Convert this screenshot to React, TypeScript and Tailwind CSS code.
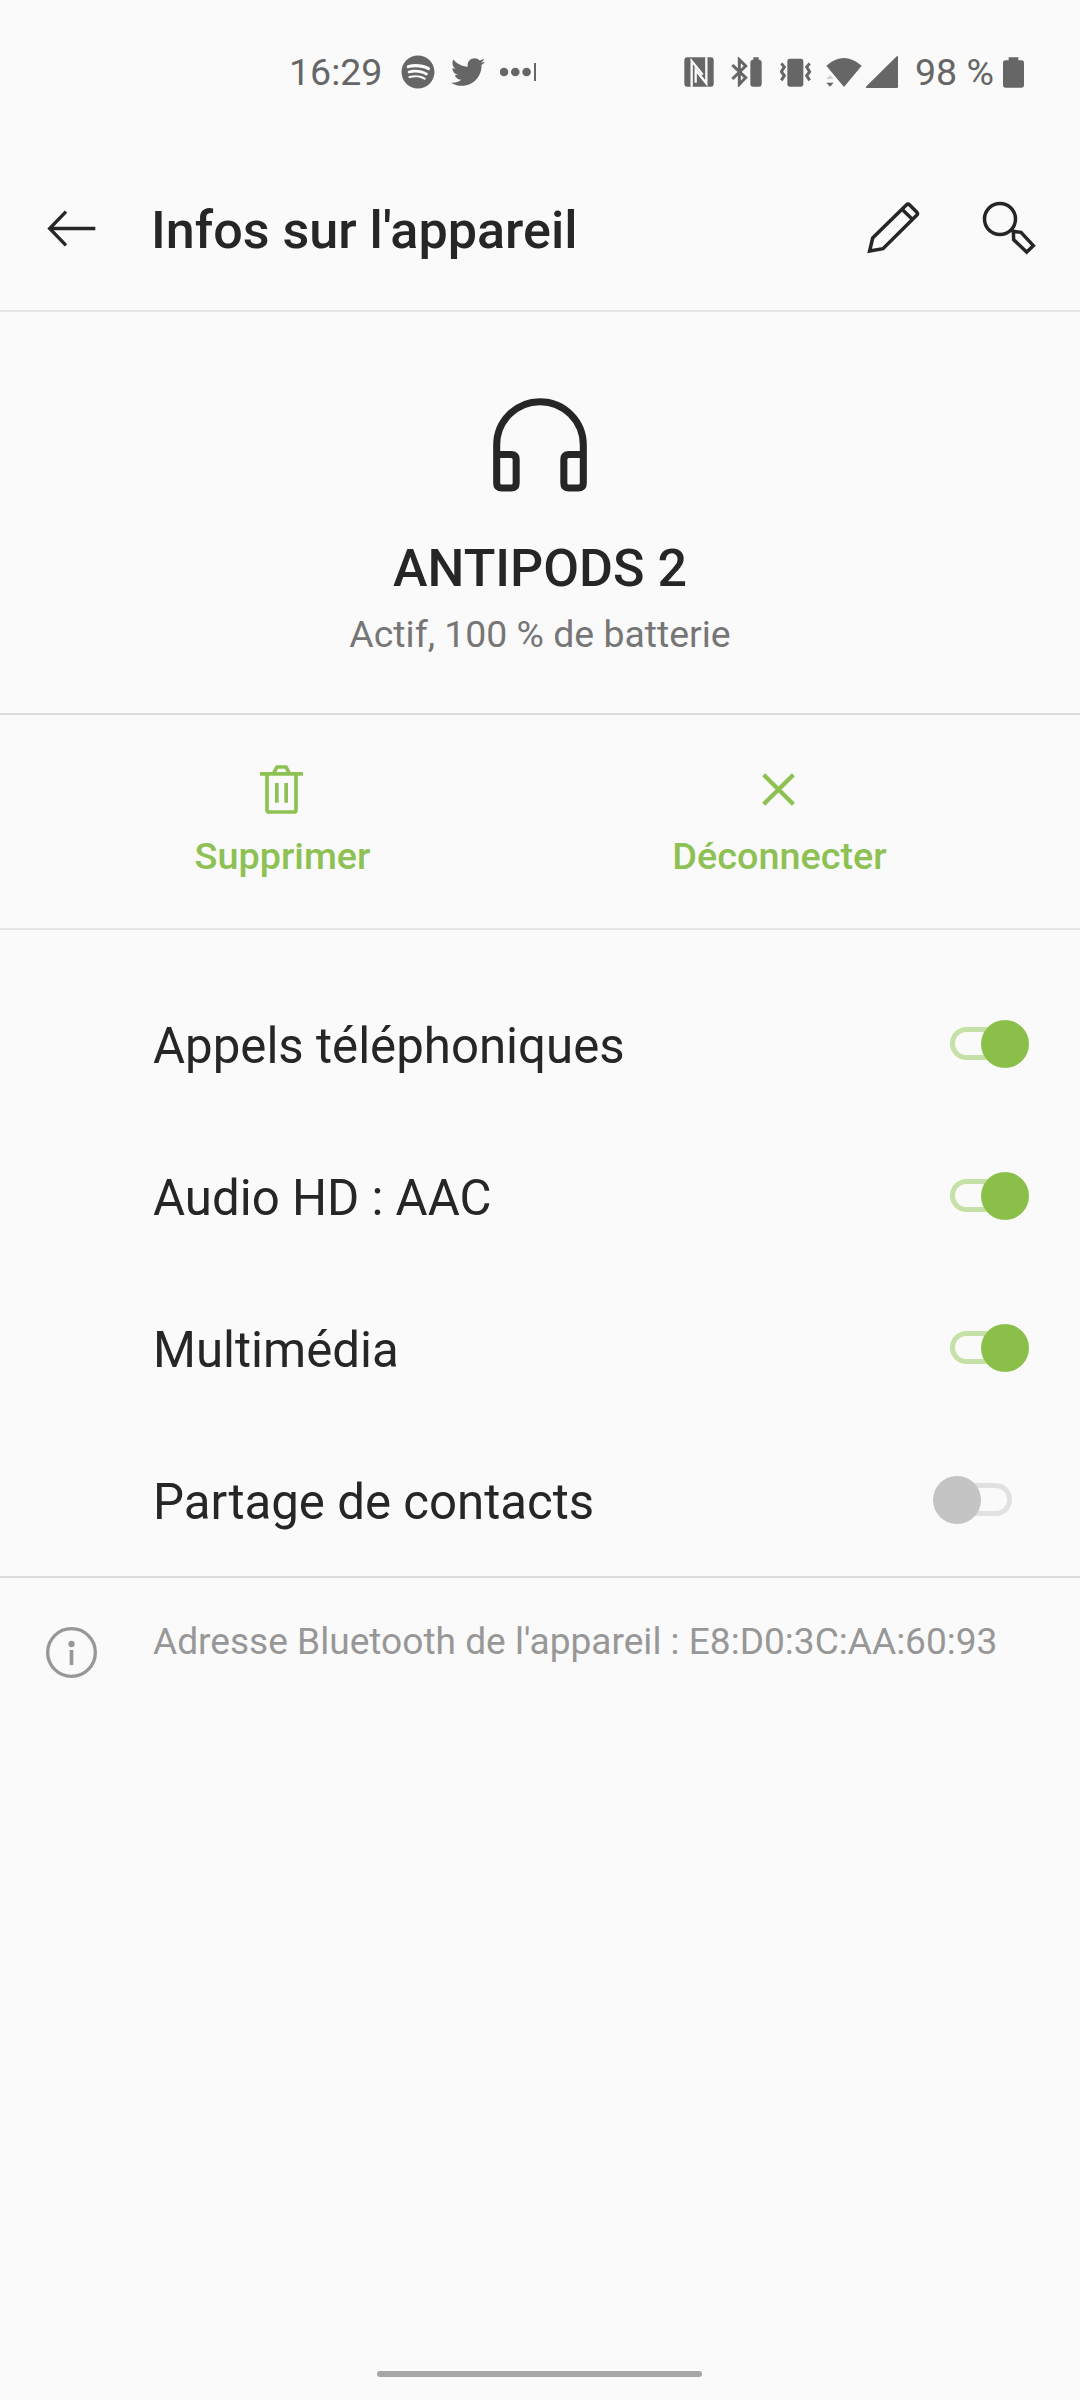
import { useState } from "react";
import { FaSpotify, FaTwitter } from "react-icons/fa";

function StatusBar() {
  return (
    <div className="flex h-[144px] items-center text-[37.5px] leading-none text-[#666666]">
      <span className="mt-[1px] ml-[289px] w-[112px]">16:29</span>
      <FaSpotify className="h-[34px] w-[34px]" />
      <FaTwitter className="ml-[16px] h-[34px] w-[34px]" />
      <svg className="ml-[15px] h-[18px] w-[36px]" viewBox="0 0 36 18" fill="currentColor">
        <circle cx="4" cy="9" r="4.3" />
        <circle cx="15.3" cy="9" r="4.3" />
        <circle cx="26.6" cy="9" r="4.3" />
        <path d="M34 0h2v18h-2z" />
      </svg>

      {/* Right side */}

      <svg className="ml-[148px] h-[30px] w-[30px]" viewBox="0 0 90 90">
        <rect x="1" y="1" width="88" height="88" rx="9" fill="currentColor" />
        <path
          d="M23 89V12L56 53M67 1V79L35 39V77"
          fill="none"
          stroke="#fafafa"
          strokeWidth="7"
        />
      </svg>
      <svg className="ml-[17px] h-[30px] w-[31px]" viewBox="0 0 93 90">
        <path
          d="M4 24L44 62L25 82V8L44 27L4 66"
          fill="none"
          stroke="currentColor"
          strokeWidth="9"
        />
        <path
          d="M67 1h16v7h3q6 2 6 8v65q0 8-8 8H66q-8 0-8-8V16q0-6 6-8h3z"
          fill="currentColor"
        />
      </svg>
      <svg className="ml-[18px] h-[30px] w-[31px]" viewBox="0 0 93 90">
        <rect x="22" y="5" width="48" height="84" rx="7" fill="currentColor" />
        <path
          d="M4 19L13 30L4 44L13 56L4 70M89 19L80 30L89 44L80 56L89 70"
          fill="none"
          stroke="currentColor"
          strokeWidth="9"
        />
      </svg>
      <svg className="ml-[15px] h-[30px] w-[36px]" viewBox="0 0 108 90">
        <path d="M1 26Q53-20 107 26L54 90z" fill="currentColor" />
        <path d="M1 66L12 54L23 66z" fill="#d2d2d2" />
        <path d="M1 77H23L12 89z" fill="currentColor" />
      </svg>
      <svg className="ml-[4px] h-[32px] w-[32px]" viewBox="0 0 96 96" fill="currentColor">
        <path d="M90 3Q96-3 96 4V92Q96 96 92 96H4Q-3 96 2 90z" />
      </svg>
      <span className="mt-[1px] ml-[17px] w-[88px] whitespace-nowrap">98 %</span>
      <svg className="h-[31px] w-[21px]" viewBox="0 0 63 93" fill="currentColor">
        <path d="M17 1h29v9h10q7 0 7 7v67q0 8-8 8H8q-8 0-8-8V17q0-7 7-7h10z" />
      </svg>
    </div>
  );
}

function Header() {
  return (
    <header className="flex h-[168px] items-center border-b-2 border-[#e5e5e5] pr-[44px] pl-[46px] text-[#262626]">
      <button aria-label="Retour">
        <svg
          className="mt-[3px] h-[37px] w-[50px]"
          viewBox="0 0 150 111"
          fill="none"
          stroke="currentColor"
          strokeWidth="10"
        >
          <path d="M60 5L11 55.5L60 106M11 55.5H148" />
        </svg>
      </button>

      <h1 className="mt-[8px] ml-[55px] flex-1 text-[52.1px] leading-none font-medium">
        Infos sur l'appareil
      </h1>

      <button aria-label="Renommer">
        <svg
          className="mt-[1px] h-[53px] w-[53px]"
          viewBox="0 0 159 159"
          fill="none"
          stroke="currentColor"
          strokeWidth="10.5"
        >
          <path d="M8 150L17 111L118 12Q123 7 128 12L149 33Q154 38 149 43L48 143ZM105 25L136 55" />
        </svg>
      </button>
      <button aria-label="Rechercher" className="ml-[62px]">
        <svg
          className="mt-[1px] h-[54px] w-[54px]"
          viewBox="0 0 162 162"
          fill="none"
          stroke="currentColor"
          strokeWidth="10.5"
        >
          <circle cx="54" cy="54" r="46.5" />
          <path d="M86 86L94 91L117 94L154 134L134 153L95 116L94 91" />
        </svg>
      </button>
    </header>
  );
}

function Device() {
  return (
    <section className="flex h-[403px] flex-col items-center border-b-2 border-[#dcdcdc] pt-[86px]">
      <svg
        className="h-[94px] w-[94px] text-[#262626]"
        viewBox="0 0 280 280"
        fill="none"
        stroke="currentColor"
        strokeWidth="21"
      >
        <path d="M11 168H54Q69 168 69 183V253Q69 268 54 268H26Q11 268 11 253V140A129 129 0 0 1 269 140V253Q269 268 254 268H226Q211 268 211 253V183Q211 168 226 168H269" />
      </svg>
      <h2 className="mt-[47px] text-[52px] leading-[60px] font-medium text-[#262626]">
        ANTIPODS 2
      </h2>
      <p className="mt-[11px] text-[37.4px] leading-[48px] text-[#767676]">
        Actif, 100 % de batterie
      </p>
    </section>
  );
}

function Actions() {
  return (
    <section className="grid h-[215px] grid-cols-2 border-b-2 border-[#e5e5e5] pr-[52px] pl-[34px] text-[37.8px] leading-[48px] font-medium text-[#8dc153]">
      <button className="flex flex-col items-center pt-[50px]">
        <svg
          className="mr-[2px] h-[49px] w-[43px]"
          viewBox="0 0 129 147"
          fill="none"
          stroke="currentColor"
          strokeWidth="11"
        >
          <path d="M0 26.5H129M41 25L51 6H78L88 25M21 27V134Q21 141 28 141H101Q108 141 108 134V27M50.5 54V113M78.5 54V113" />
        </svg>
        <span className="mt-[18px]">Supprimer</span>
      </button>
      <button className="flex flex-col items-center pt-[58px]">
        <svg
          className="mr-[2px] h-[33px] w-[33px]"
          viewBox="0 0 99 99"
          fill="none"
          stroke="currentColor"
          strokeWidth="13"
        >
          <path d="M5 5L94 94M94 5L5 94" />
        </svg>
        <span className="mt-[26px]">Déconnecter</span>
      </button>
    </section>
  );
}

function Toggle({ on, onChange }: { on: boolean; onChange: () => void }) {
  return (
    <button
      role="switch"
      aria-checked={on}
      onClick={onChange}
      className={`relative -mt-[1px] h-[33px] w-[62px] rounded-full border-[5px] ${
        on ? "border-[#c5e1a7]" : "border-[#e1e1e1]"
      }`}
    >
      <span
        className={`absolute -top-[12px] h-[48px] w-[48px] rounded-full ${
          on ? "left-[26px] bg-[#8ac04a]" : "left-[-22px] bg-[#c4c4c4]"
        }`}
      />
    </button>
  );
}

function Profiles() {
  const [profiles, setProfiles] = useState([
    { name: "Appels téléphoniques", on: true },
    { name: "Audio HD : AAC", on: true },
    { name: "Multimédia", on: true },
    { name: "Partage de contacts", on: false },
  ]);

  const toggle = (name: string) =>
    setProfiles(profiles.map((p) => (p.name === name ? { ...p, on: !p.on } : p)));

  return (
    <section className="h-[648px] border-b-2 border-[#dcdcdc] pt-[38px]">
      {profiles.map((p) => (
        <div
          key={p.name}
          className="flex h-[152px] items-center justify-between pr-[68px] pl-[153px]"
        >
          <span className="mt-[3px] text-[49.2px] leading-[60px] text-[#262626]">{p.name}</span>
          <Toggle on={p.on} onChange={() => toggle(p.name)} />
        </div>
      ))}
    </section>
  );
}

function Address() {
  return (
    <footer className="flex flex-1 items-start pl-[46px] text-[#979797]">
      <svg className="mt-[49px] h-[51px] w-[51px]" viewBox="0 0 153 153">
        <circle cx="76.5" cy="76.5" r="71.5" fill="none" stroke="currentColor" strokeWidth="10" />
        <circle cx="76.5" cy="51" r="9.5" fill="currentColor" />
        <path d="M71 69h11v45h-11z" fill="currentColor" />
      </svg>
      <p className="mt-[40px] ml-[56px] text-[37.08px] leading-[48px] whitespace-nowrap">
        Adresse Bluetooth de l'appareil : E8:D0:3C:AA:60:93
      </p>
    </footer>
  );
}

export default function App() {
  return (
    <main className="flex h-[2400px] w-[1080px] flex-col overflow-hidden bg-[#fafafa] font-['Roboto',sans-serif]">
      <StatusBar />
      <Header />
      <Device />
      <Actions />
      <Profiles />
      <Address />
      <div className="mb-[23px] ml-[377px] h-[6px] w-[325px] rounded-full bg-[#a6a6a6]" />
    </main>
  );
}
